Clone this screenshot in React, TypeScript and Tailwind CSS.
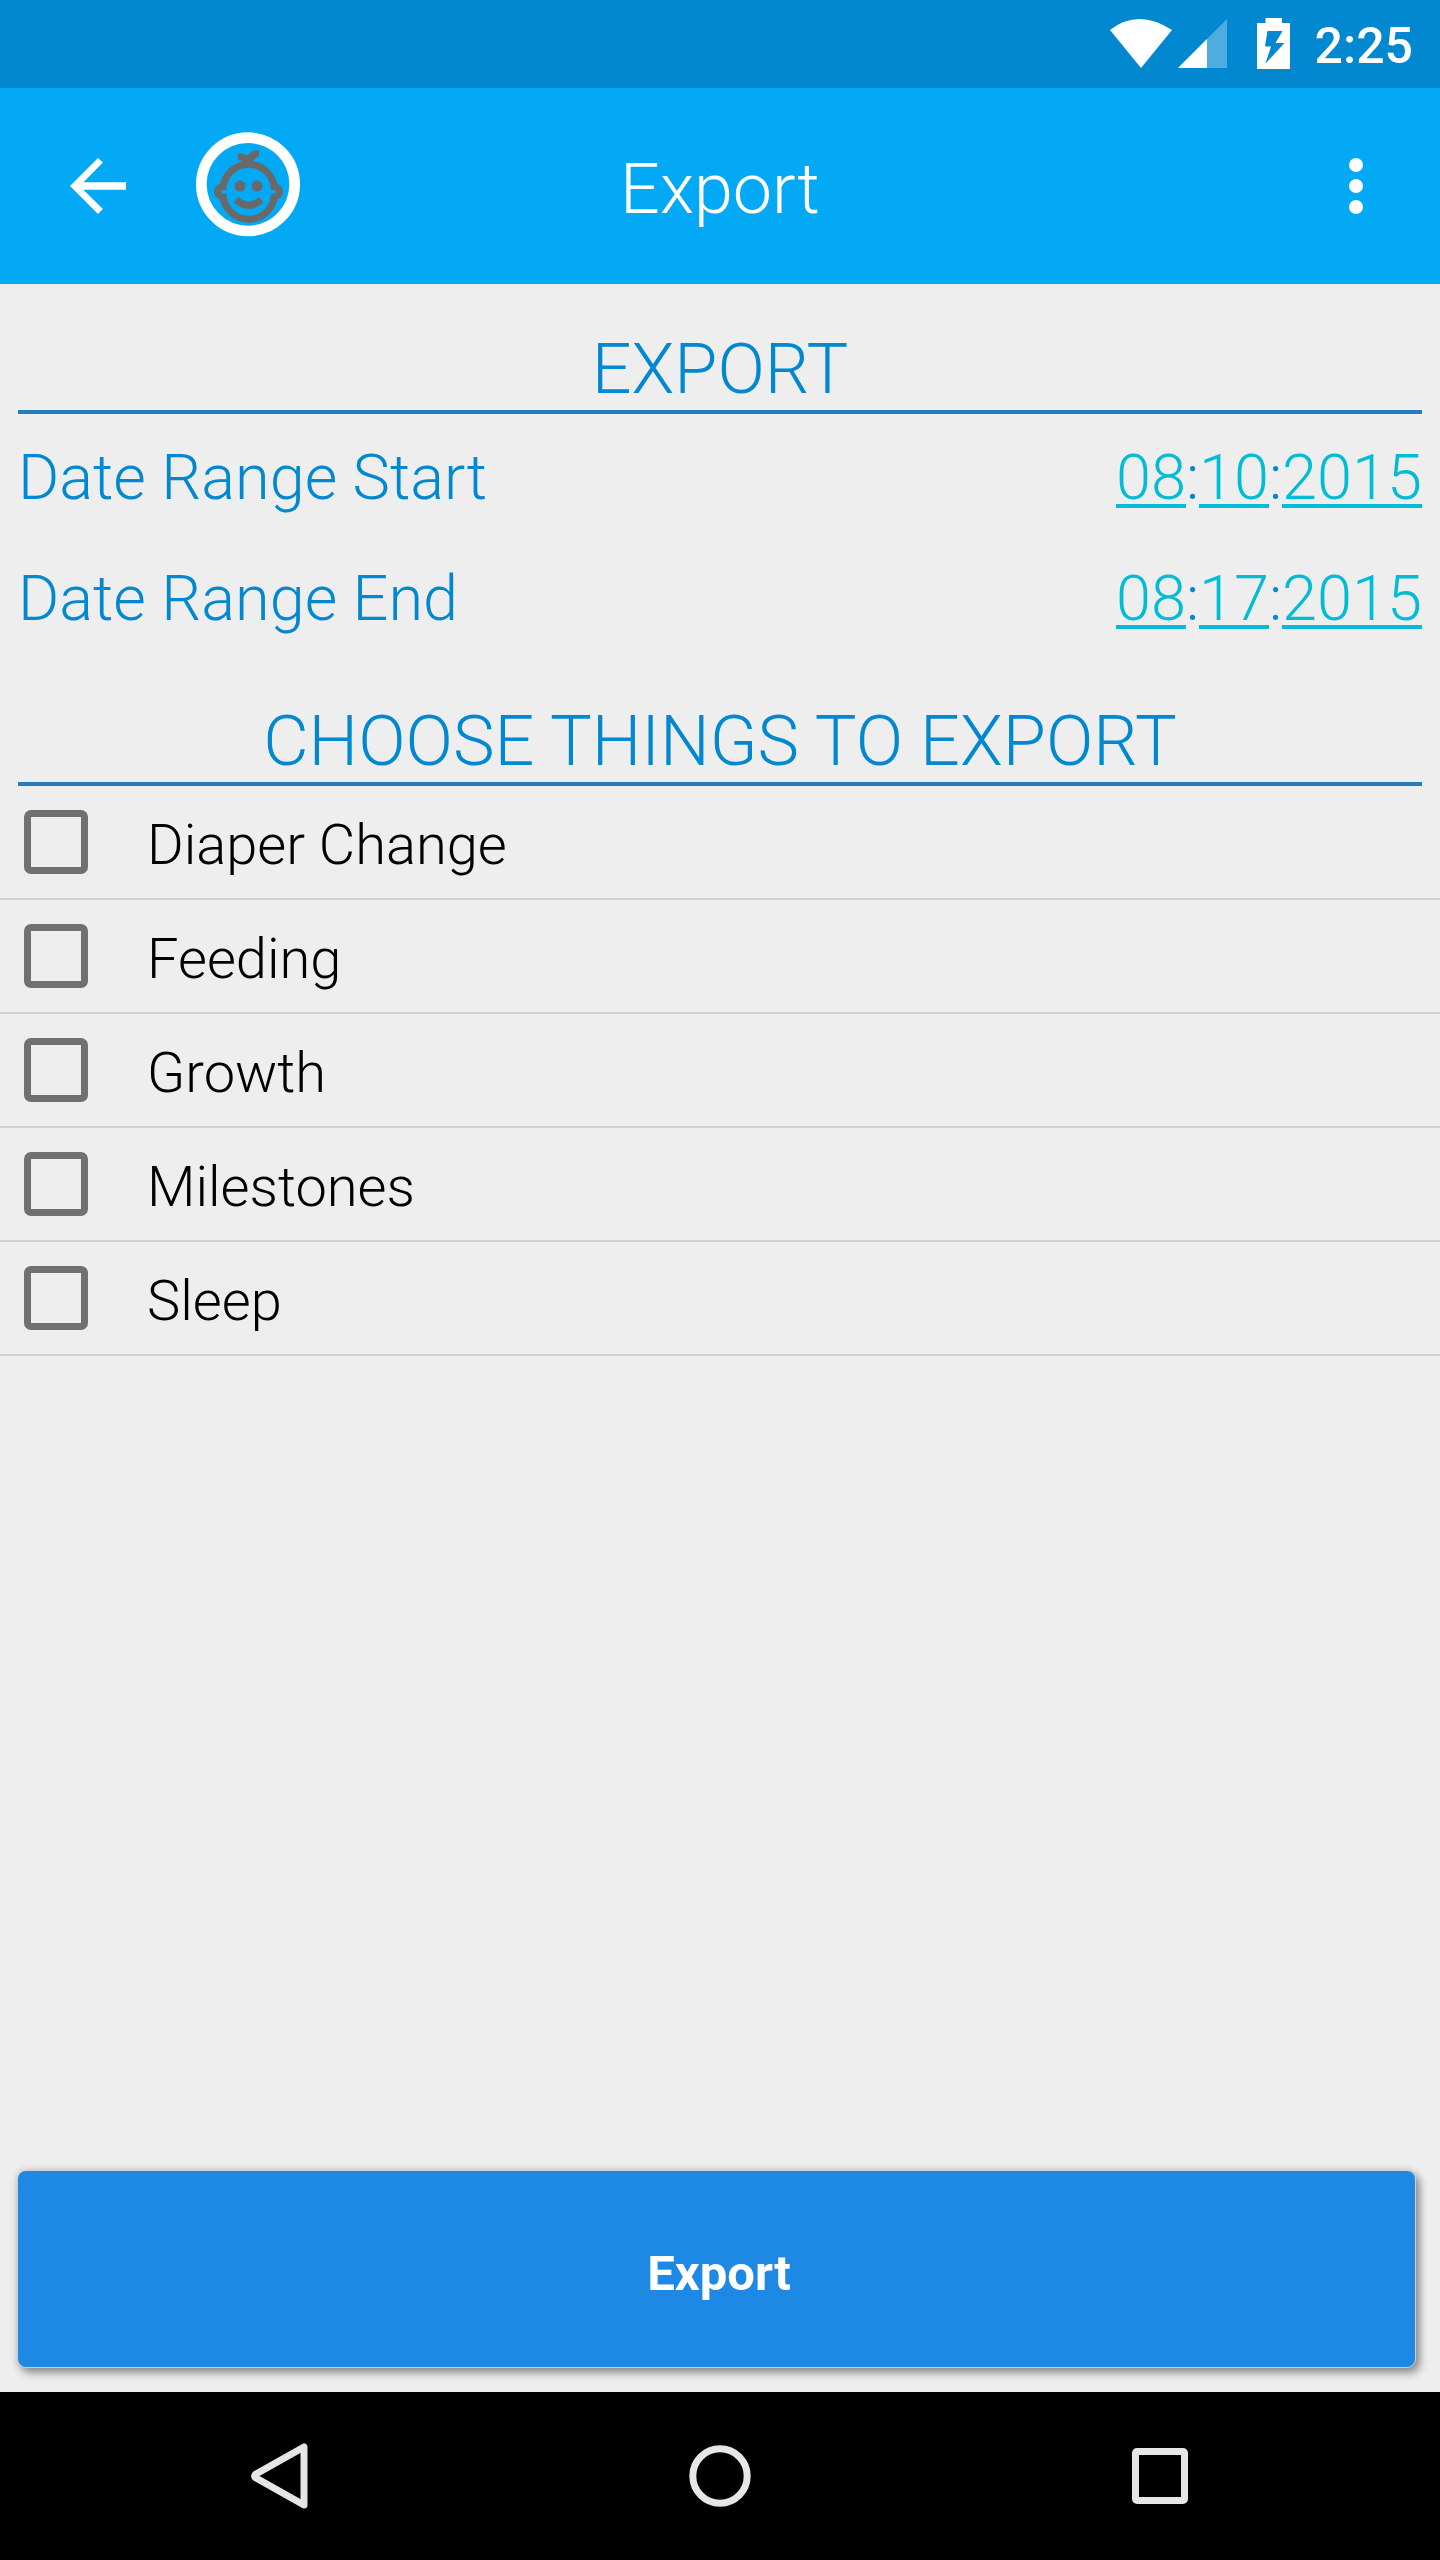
import React, { useState } from "react";

const items = ["Diaper Change", "Feeding", "Growth", "Milestones", "Sleep"];

function StatusBar() {
  return (
    <div className="flex h-[88px] shrink-0 justify-end bg-[#0288d1] pr-[27px]">
      <svg className="h-[88px] w-[190px]" viewBox="1110 0 190 88" fill="#fff">
        <path d="M1110 30Q1138 8 1172 30L1141 68Z" />
        <path d="M1178 68L1227 19V68Z" fillOpacity=".3" />
        <path d="M1178 68L1207 39V68Z" />
        <path
          fillRule="evenodd"
          d="M1265.5 18H1282V23H1290V69H1257V23H1265.5ZM1267.5 31L1265 46.5H1271L1265.5 63.5L1284.5 43H1275.5L1282.5 31Z"
        />
      </svg>
      <span className="mt-[17px] ml-[15px] text-[50px] leading-[58px] font-medium text-white">2:25</span>
    </div>
  );
}

function BabyAvatar() {
  return (
    <svg className="mb-[3px] ml-[56px] h-[105px] w-[104px]" viewBox="468 69 312 315" fill="none">
      <circle cx="624" cy="226" r="140" stroke="#fff" strokeWidth="32" />
      <g stroke="#696969" strokeWidth="21">
        <path d="M549 243A77 77 0 0 1 703 243" />
        <path d="M549 254A77 77 0 0 0 703 254" />
        <path d="M588 272Q626 306 664 272" />
      </g>
      <g fill="#696969">
        <path d="M545 222Q522 230 522 248Q522 266 545 272L551 254Q543 254 543 249Q543 243 551 243Z" />
        <path d="M707 222Q729 230 729 248Q729 266 707 272L701 254Q708 254 708 249Q708 243 701 243Z" />
        <circle cx="600" cy="231" r="16.5" />
        <circle cx="651" cy="231" r="16.5" />
        <path d="M594 132Q612 133 622 140Q634 124 657 123V143Q645 146 638 157H608L594 152Z" />
      </g>
    </svg>
  );
}

function AppBar() {
  return (
    <header className="relative flex h-[196px] shrink-0 items-center bg-[#03a9f4] px-[42px] text-white">
      <svg className="ml-[14px] h-[84px] w-[84px]" viewBox="0 0 24 24" fill="currentColor">
        <path d="M20 10.9H7.83l5.59-5.6L12 4l-8 8 8 8 1.41-1.41L7.83 13.1H20v-2.2z" />
      </svg>
      <BabyAvatar />
      <h1 className="pointer-events-none absolute inset-x-0 top-[60px] text-center text-[70px] leading-[82px] font-light">
        Export
      </h1>
      <svg className="ml-auto h-[84px] w-[84px]" viewBox="0 0 24 24" fill="currentColor">
        <circle cx="12" cy="6" r="2" />
        <circle cx="12" cy="12" r="2" />
        <circle cx="12" cy="18" r="2" />
      </svg>
    </header>
  );
}

function SectionTitle({ children }: { children: string }) {
  return (
    <h2 className="border-b-4 border-[#267dbd] pb-[3px] text-center text-[70px] leading-[76px] font-light text-[#0288d1]">
      {children}
    </h2>
  );
}

function DateRow({ label, parts }: { label: string; parts: string[] }) {
  return (
    <div className="flex h-[121px] items-center justify-between pt-[6px] text-[63px] leading-[74px] font-light text-[#0288d1]">
      <span>{label}</span>
      <span className="flex">
        {parts.map((p, i) => (
          <React.Fragment key={i}>
            {i > 0 && <span className="w-[13px] text-center">:</span>}
            <span className="tracking-[0.06px] text-[#00bcd4] underline decoration-4 underline-offset-[5px]">{p}</span>
          </React.Fragment>
        ))}
      </span>
    </div>
  );
}

function CheckRow({ label }: { label: string }) {
  const [on, setOn] = useState(false);
  return (
    <li className="flex h-[114px] items-center border-b-2 border-[#d0d0d0] pl-[24px]" onClick={() => setOn(!on)}>
      <span className={`h-[64px] w-[64px] rounded-[7px] border-[7px] border-[#707070] ${on ? "bg-[#707070]" : ""}`} />
      <span className="ml-[59px] pt-[6px] text-[56px] leading-[66px] font-light text-black">{label}</span>
    </li>
  );
}

export default function App() {
  return (
    <div className="flex h-[2560px] w-[1440px] flex-col bg-[#eeeeee] font-['Roboto',sans-serif]">
      <StatusBar />
      <AppBar />
      <main className="flex flex-1 flex-col">
        <section className="px-[18px] pt-[47px]">
          <SectionTitle>EXPORT</SectionTitle>
          <DateRow label="Date Range Start" parts={["08", "10", "2015"]} />
          <DateRow label="Date Range End" parts={["08", "17", "2015"]} />
        </section>
        <section className="pt-[47px]">
          <div className="px-[18px]">
            <SectionTitle>CHOOSE THINGS TO EXPORT</SectionTitle>
          </div>
          <ul>
            {items.map((t) => (
              <CheckRow key={t} label={t} />
            ))}
          </ul>
        </section>
        <button className="mt-auto mr-[25px] mb-[25px] ml-[18px] h-[196px] rounded-[8px] bg-[#1e88e5] pt-[9px] pl-[5px] text-[49px] font-bold text-white shadow-[0_0_0_1px_#d0d0d0,4px_5px_9px_1px_rgba(0,0,0,0.38),0_0_8px_1px_rgba(0,0,0,0.15)]">
          Export
        </button>
      </main>
      <nav className="flex h-[168px] shrink-0 items-center justify-between bg-black px-[238px]">
        <svg className="h-[84px] w-[84px]" viewBox="238 2434 84 84" fill="none" stroke="#e6e6e6" strokeWidth="7" strokeLinejoin="round">
          <path d="M304 2447V2505L256 2478Q253 2476 256 2474Z" />
        </svg>
        <svg className="h-[84px] w-[84px]" viewBox="0 0 84 84" fill="none" stroke="#e6e6e6" strokeWidth="7">
          <circle cx="42" cy="42" r="27.2" />
        </svg>
        <svg className="h-[84px] w-[84px]" viewBox="0 0 84 84" fill="none" stroke="#e6e6e6" strokeWidth="7">
          <rect x="17.5" y="17.5" width="49" height="49" rx="1.5" />
        </svg>
      </nav>
    </div>
  );
}
